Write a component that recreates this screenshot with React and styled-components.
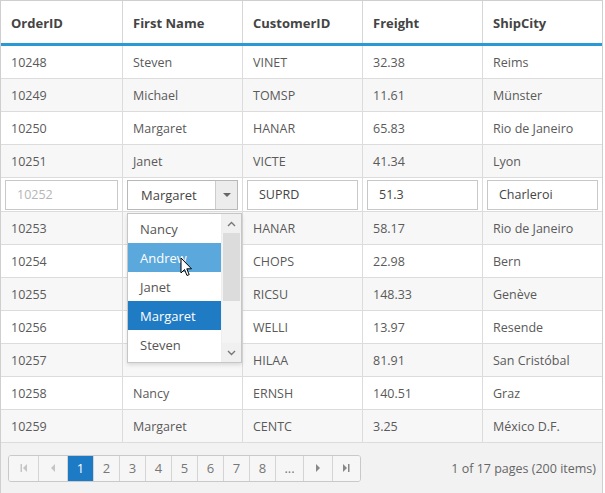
import React from "react";
import styled, { createGlobalStyle } from "styled-components";

const Global = createGlobalStyle`
  html, body { margin: 0; padding: 0; background: #fff; }
  body { font-family: "Open Sans", "Noto Sans", sans-serif; }
  * { box-sizing: border-box; }
`;

const Grid = styled.div`
  position: relative;
  width: 603px;
  border: 1px solid #cfcfcf;
  font-family: "Open Sans", "Noto Sans", sans-serif;
  color: #555;
`;

const HeaderRow = styled.div`
  display: grid;
  grid-template-columns: 121px 120px 120px 120px 120px;
  height: 45px;
  border-bottom: 3px solid #2a9ad4;
`;

const HeaderCell = styled.div`
  display: flex;
  align-items: center;
  padding: 2px 0 0 10px;
  font-size: 13px;
  font-weight: 700;
  color: #444;
  border-left: ${(p) => (p.$first ? "none" : "1px solid #d6d6d6")};
`;

const Row = styled.div`
  display: grid;
  grid-template-columns: 121px 120px 120px 120px 120px;
  height: ${(p) => (p.$edit ? "34px" : "33px")};
  border-bottom: 1px solid #dcdcdc;
  background: ${(p) => (p.$alt ? "#f7f7f7" : "#fff")};
`;

const Cell = styled.div`
  display: flex;
  align-items: center;
  padding-left: 10px;
  font-size: 12.5px;
  color: #5a5a5a;
  border-left: ${(p) => (p.$first ? "none" : "1px solid #dcdcdc")};
  white-space: nowrap;
`;

const EditCell = styled.div`
  display: flex;
  align-items: center;
  padding: 0 4px;
  border-left: ${(p) => (p.$first ? "none" : "1px solid #dcdcdc")};
`;

const Input = styled.div`
  flex: 1;
  height: 30px;
  border: 1px solid #c8c8c8;
  display: flex;
  align-items: center;
  padding-left: 11px;
  font-size: 12.5px;
  color: ${(p) => (p.$disabled ? "#b5b5b5" : "#444")};
  background: #fff;
`;

const Select = styled.div`
  flex: 1;
  height: 30px;
  border: 1px solid #b8b8b8;
  display: flex;
  align-items: stretch;
  background: #fff;
  font-size: 13px;
  color: #444;
`;

const SelectText = styled.div`
  flex: 1;
  display: flex;
  align-items: center;
  padding-left: 13px;
`;

const SelectArrow = styled.div`
  width: 22px;
  border-left: 1px solid #ccc;
  background: #ececec;
  display: flex;
  align-items: center;
  justify-content: center;
`;

const Popup = styled.div`
  position: absolute;
  left: 126px;
  top: 212px;
  width: 115px;
  height: 150px;
  border: 1px solid #c6c6c6;
  background: #fff;
  box-shadow: 0 2px 4px rgba(0, 0, 0, 0.12);
  display: flex;
  z-index: 5;
`;

const List = styled.div`
  flex: 1;
  display: flex;
  flex-direction: column;
`;

const Item = styled.div`
  height: 29px;
  display: flex;
  align-items: center;
  padding-left: 12px;
  font-size: 13px;
  color: ${(p) => (p.$hover || p.$selected ? "#fff" : "#555")};
  background: ${(p) => (p.$selected ? "#1f7bc4" : p.$hover ? "#5aa8dc" : "#fff")};
`;

const Scrollbar = styled.div`
  width: 20px;
  background: #f4f4f4;
  display: flex;
  flex-direction: column;
  border-left: 1px solid #eee;
`;

const ScrollBtn = styled.div`
  height: 19px;
  display: flex;
  align-items: center;
  justify-content: center;
  background: #f0f0f0;
`;

const ScrollTrack = styled.div`
  flex: 1;
  padding: 0 1px;
`;

const Thumb = styled.div`
  height: 68px;
  background: #dcdcdc;
`;

const Cursor = styled.svg`
  position: absolute;
  left: 179px;
  top: 256px;
  z-index: 6;
`;

const Pager = styled.div`
  height: 50px;
  background: #f2f2f2;
  display: flex;
  align-items: center;
  justify-content: space-between;
  padding: 0 6px 0 7px;
`;

const Pages = styled.div`
  display: flex;
  height: 27px;
  border: 1px solid #c9c9c9;
  border-radius: 3px;
  overflow: hidden;
  background: #f4f4f4;
`;

const PageBtn = styled.div`
  width: ${(p) => p.$w || 26}px;
  display: flex;
  align-items: center;
  justify-content: center;
  font-size: 13px;
  color: ${(p) => (p.$active ? "#fff" : "#777")};
  background: ${(p) => (p.$active ? "#1d7ac5" : "#f6f6f6")};
  border-left: ${(p) => (p.$first ? "none" : "1px solid #d4d4d4")};
`;

const PagerInfo = styled.div`
  font-size: 12.5px;
  color: #666;
`;

const rowsTop = [
  ["10248", "Steven", "VINET", "32.38", "Reims"],
  ["10249", "Michael", "TOMSP", "11.61", "Münster"],
  ["10250", "Margaret", "HANAR", "65.83", "Rio de Janeiro"],
  ["10251", "Janet", "VICTE", "41.34", "Lyon"],
];

const rowsBottom = [
  ["10253", "", "HANAR", "58.17", "Rio de Janeiro"],
  ["10254", "", "CHOPS", "22.98", "Bern"],
  ["10255", "", "RICSU", "148.33", "Genève"],
  ["10256", "", "WELLI", "13.97", "Resende"],
  ["10257", "", "HILAA", "81.91", "San Cristóbal"],
  ["10258", "Nancy", "ERNSH", "140.51", "Graz"],
  ["10259", "Margaret", "CENTC", "3.25", "México D.F."],
];

const headers = ["OrderID", "First Name", "CustomerID", "Freight", "ShipCity"];

const DataRow = ({ data, alt }) => (
  <Row $alt={alt}>
    {data.map((v, i) => (
      <Cell key={i} $first={i === 0}>
        {v}
      </Cell>
    ))}
  </Row>
);

const Tri = ({ dir, color = "#aaa" }) => {
  const pts = {
    down: "0,0 8,0 4,4",
    left: "4,0 4,8 0,4",
    right: "0,0 4,4 0,8",
  }[dir];
  const w = dir === "down" ? 8 : 4;
  const h = dir === "down" ? 4 : 8;
  return (
    <svg width={w} height={h} viewBox={`0 0 ${w} ${h}`}>
      <polygon points={pts} fill={color} />
    </svg>
  );
};

const Chevron = ({ up }) => (
  <svg width="9" height="6" viewBox="0 0 9 6">
    <polyline
      points={up ? "1,5 4.5,1.5 8,5" : "1,1 4.5,4.5 8,1"}
      fill="none"
      stroke="#777"
      strokeWidth="1.4"
    />
  </svg>
);

const EdgeIcon = ({ last }) => (
  <svg width="7" height="8" viewBox="0 0 7 8">
    {last ? (
      <>
        <polygon points="0,0 4,4 0,8" fill="#888" />
        <rect x="5" y="0" width="1.5" height="8" fill="#888" />
      </>
    ) : (
      <>
        <rect x="0.5" y="0" width="1.5" height="8" fill="#c5c5c5" />
        <polygon points="7,0 3,4 7,8" fill="#c5c5c5" />
      </>
    )}
  </svg>
);

export default function App() {
  return (
    <>
      <Global />
      <Grid>
        <HeaderRow>
          {headers.map((h, i) => (
            <HeaderCell key={h} $first={i === 0}>
              {h}
            </HeaderCell>
          ))}
        </HeaderRow>
        {rowsTop.map((r, i) => (
          <DataRow key={r[0]} data={r} alt={i % 2 === 1} />
        ))}
        <Row $edit>
          <EditCell $first>
            <Input $disabled>10252</Input>
          </EditCell>
          <EditCell>
            <Select>
              <SelectText>Margaret</SelectText>
              <SelectArrow>
                <Tri dir="down" color="#666" />
              </SelectArrow>
            </Select>
          </EditCell>
          <EditCell>
            <Input>SUPRD</Input>
          </EditCell>
          <EditCell>
            <Input>51.3</Input>
          </EditCell>
          <EditCell>
            <Input>Charleroi</Input>
          </EditCell>
        </Row>
        {rowsBottom.map((r, i) => (
          <DataRow key={r[0]} data={r} alt={i % 2 === 0} />
        ))}
        <Pager>
          <Pages>
            <PageBtn $first $w={29}>
              <EdgeIcon />
            </PageBtn>
            <PageBtn $w={29}>
              <Tri dir="left" color="#c5c5c5" />
            </PageBtn>
            <PageBtn $active>1</PageBtn>
            {["2", "3", "4", "5", "6", "7", "8"].map((n) => (
              <PageBtn key={n}>{n}</PageBtn>
            ))}
            <PageBtn $w={28}>...</PageBtn>
            <PageBtn $w={29}>
              <Tri dir="right" color="#888" />
            </PageBtn>
            <PageBtn $w={28}>
              <EdgeIcon last />
            </PageBtn>
          </Pages>
          <PagerInfo>1 of 17 pages (200 items)</PagerInfo>
        </Pager>

        <Popup>
          <List>
            <Item>Nancy</Item>
            <Item $hover>Andrew</Item>
            <Item>Janet</Item>
            <Item $selected>Margaret</Item>
            <Item>Steven</Item>
          </List>
          <Scrollbar>
            <ScrollBtn>
              <Chevron up />
            </ScrollBtn>
            <ScrollTrack>
              <Thumb />
            </ScrollTrack>
            <ScrollBtn>
              <Chevron />
            </ScrollBtn>
          </Scrollbar>
        </Popup>
        <Cursor width="13" height="20" viewBox="0 0 13 20">
          <path
            d="M1 1 L1 16 L4.5 12.5 L7 18.5 L9.2 17.6 L6.8 11.8 L11.5 11.8 Z"
            fill="#fff"
            stroke="#000"
            strokeWidth="1"
            strokeLinejoin="round"
          />
        </Cursor>
      </Grid>
    </>
  );
}
